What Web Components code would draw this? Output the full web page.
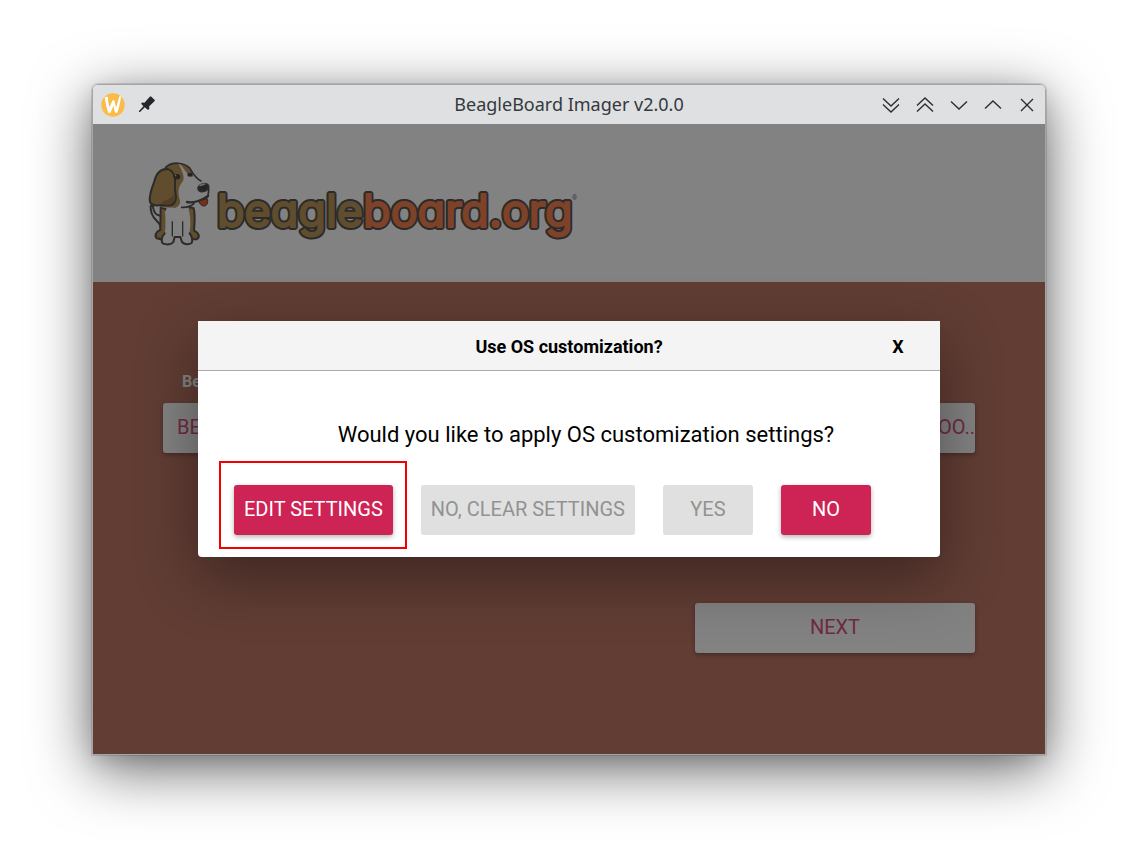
<!DOCTYPE html>
<html lang="en">
<head>
<meta charset="utf-8">
<title>BeagleBoard Imager</title>
<style>
  html { height: 100%; background: #fff; }
  body { margin: 0; min-height: 100%; box-sizing: border-box; padding: 84px 98px 87px 92px; display: flex; font-family: Roboto, "Liberation Sans", sans-serif; }
</style>
</head>
<body>
<app-window></app-window>
<script>
const define = (name, html) => {
  const tpl = document.createElement('template');
  tpl.innerHTML = html;
  customElements.define(name, class extends HTMLElement {
    constructor() {
      super();
      this.attachShadow({ mode: 'open' }).append(tpl.content.cloneNode(true));
    }
  });
};

/* Raised push button; look is chosen by the "kind" attribute */
class PushButton extends HTMLElement {
  constructor() {
    super();
    this.attachShadow({ mode: 'open' }).innerHTML = `
    <style>
      :host { display: block; }
      button { display: block; width: 100%; height: 50px; min-width: 90px; box-sizing: border-box; padding: 0 10px 2px; border: 0; border-radius: 3px;
        font: 400 20px/24px Roboto, sans-serif; white-space: nowrap; background: #fff; color: #da5580;
        box-shadow: 0 2px 5px rgba(0,0,0,.3); text-align: center; }
      :host([kind=primary]) button { background: #cd2355; color: #fff; }
      button:disabled { background: #e0e0e0; color: #929292; box-shadow: none; }
      :host([align=start]) button { text-align: left; padding: 0 14px 2px; }
      :host([align=end]) button { text-align: right; padding: 0 0 2px; }
    </style>
    <button type="button"><slot></slot></button>`;
    this.shadowRoot.querySelector('button').disabled = this.hasAttribute('disabled');
  }
}
customElements.define('push-button', PushButton);

define('title-bar', `
<style>
  :host { display: grid; grid-template-columns: 1fr auto 1fr; align-items: center; height: 39px; background: #dee0e2; color: #35393d; border-radius: 5px 5px 0 0; }
  .left { display: flex; align-items: center; gap: 10px; padding-left: 8px; }
  .right { display: flex; justify-content: flex-end; gap: 10px; padding-right: 6px; }
  h1 { margin: 0; padding-bottom: 2px; font: 400 18px/24px "Noto Sans", sans-serif; }
  button { width: 24px; height: 24px; padding: 0; border: 0; background: none; color: #2b2f33; }
  svg { display: block; width: 24px; height: 24px; }
  .right path { fill: none; stroke: currentColor; stroke-width: 1.4; }
</style>
<div class="left">
  <svg viewBox="0 0 24 24" aria-hidden="true">
    <circle cx="12" cy="12" r="11.7" fill="#fabb48"/>
    <path d="M3.700 4.300 C5 4 5.800 3.600 7 3.800 C6.800 7 7.600 11 8.700 14.300 C9.600 11.500 10.700 9.200 11.600 7.200 L13.600 7.600 C13.700 10 14.300 12.300 15.200 14.500 C16.200 11 17.300 7.500 18.300 3.600 L20 3.200 C19.600 9 18 15 16 20 L14.300 19.800 C13.300 17.500 12.800 15.300 12.500 12.800 C11.400 15 10.600 17.500 9.500 19.800 L7.500 20.300 C5.500 15.500 4.500 10 3.700 4.300 Z" fill="#fff"/>
  </svg>
  <button aria-label="Pin window"><svg viewBox="0 0 24 24"><path fill="#24282c" d="M14.500 4 L15.800 3.200 L20 7.300 L19.200 8.500 L14 13.500 L14.500 15.500 L13 17 L9.800 14.200 L5 19 L4 19 L4 18 L8.400 13.200 L6 10.500 L7.500 9.500 L9.500 9.700 Z"/></svg></button>
</div>
<h1>BeagleBoard Imager v2.0.0</h1>
<div class="right">
  <button aria-label="Keep below"><svg viewBox="0 0 24 24"><path d="M4 5.500 L12 13 L20 5.500 M4 11.500 L12 19 L20 11.500"/></svg></button>
  <button aria-label="Keep above"><svg viewBox="0 0 24 24"><path d="M4 12.500 L12 5 L20 12.500 M4 18.500 L12 11 L20 18.500"/></svg></button>
  <button aria-label="Minimize"><svg viewBox="0 0 24 24"><path d="M4 8.500 L12 16 L20 8.500"/></svg></button>
  <button aria-label="Maximize"><svg viewBox="0 0 24 24"><path d="M4 15.500 L12 8 L20 15.500"/></svg></button>
  <button aria-label="Close"><svg viewBox="0 0 24 24"><path d="M6 6 L18 18 M18 6 L6 18"/></svg></button>
</div>`);

define('brand-logo', `
<style>
  :host { display: flex; align-items: flex-start; }
  .dog { flex: none; width: 64px; height: 84px; }
  .word { flex: none; width: 372px; height: 84px; overflow: visible; }
  #name { font: 400 45px Inter, sans-serif; font-feature-settings: "cv11" 1; stroke-linejoin: round; stroke-width: var(--edge-width, 2px); }
  .tan { fill: #bb9758; stroke: var(--edge, #bb9758); }
  .orange { fill: #f58150; stroke: var(--edge, #f58150); }
  .outline { --edge: #585454; --edge-width: 6px; }
  .reg { font: 400 7px "Liberation Sans", sans-serif; }
</style>
<svg class="dog" viewBox="22 36 192 252" aria-hidden="true" stroke="#585454" stroke-width="6" stroke-linejoin="round" stroke-linecap="round">
  <path d="M62 252 C66 230 62 222 51 212 C38 200 32 185 33 169 C34 164 39 165 40 171 C42 188 50 196 62 197" fill="#fff"/>
  <path d="M63 172 L62 240 C48 245 44 258 51 265 L70 269 C80 268 82 258 80 245 L85 180 Z" fill="#bb9758"/>
  <path d="M145 170 L162 175 C168 200 164 225 163 242 C180 250 181 262 171 268 L148 268 Z" fill="#bb9758"/>
  <path d="M76 186 C78 210 78 235 75 250 C64 262 64 277 71 281 C82 285 96 284 101 276 L105 260 L122 260 L127 276 C134 284 147 285 156 279 C160 268 156 258 150 250 C154 220 152 195 146 170 L85 168 Z" fill="#fff" stroke="none"/>
  <path d="M75 250 C64 262 64 277 71 281 C82 285 96 284 101 276 L105 261 L122 261 L127 276 C134 284 147 285 156 279 C160 268 156 258 150 250" fill="none"/>
  <path d="M98 215 L98 258 M129 215 L129 258" fill="none" stroke-width="4"/>
  <path d="M72 58 C90 35 130 35 150 54 C160 66 163 80 176 92 C195 94 209 103 207 116 C207 128 206 138 200 147 C185 152 172 154 163 160 C154 169 140 173 120 172 L66 172 C60 150 60 90 72 58 Z" fill="#fff" stroke="none"/>
  <path d="M70 58 C85 40 103 38 117 41 C124 58 137 76 130 94 C120 104 112 120 119 145 C124 158 120 168 108 173 L64 172 Z" fill="#bb9758" stroke="none"/>
  <path d="M122 41 C145 43 159 61 160 80 C150 80 145 74 140 67 C134 58 127 50 122 41 Z" fill="#bb9758" stroke="none"/>
  <path d="M78 52 C96 35 132 35 151 55 C158 67 164 82 184 93 M207 116 C207 128 206 138 200 147 M163 160 C154 169 140 173 126 172" fill="none" stroke-width="5"/>
  <path d="M177 153 C182 174 207 174 204 149 C197 145 187 149 177 153 Z" fill="#f05a28" stroke-width="3"/>
  <path d="M142 156 C162 161 190 149 205 138" fill="none" stroke-width="7"/>
  <path d="M31 156 C27 140 35 117 44 94 C49 73 61 57 82 57 C102 60 108 82 106 104 C103 126 113 136 107 153 C99 171 80 166 65 165 C47 168 35 165 31 156 Z" fill="#bb9758"/>
  <path d="M103 132 C94 148 82 149 68 155 C64 157 68 160 74 161 C90 164 101 160 104 150 Z" fill="#9d7848" stroke="none"/>
  <ellipse cx="112" cy="80" rx="10" ry="8" fill="#494545" stroke="none"/>
  <ellipse cx="151" cy="74" rx="8" ry="6" fill="#494545" stroke="none"/>
  <circle cx="108" cy="77" r="2" fill="#fff" stroke="none"/>
  <ellipse cx="191" cy="113" rx="16" ry="11" fill="#494545" transform="rotate(-18 191 113)"/>
  <ellipse cx="188" cy="104" rx="10" ry="3" fill="#d8d4d4" stroke="none" transform="rotate(-18 188 104)"/>
</svg>
<svg class="word" viewBox="0 0 372 84" role="img" aria-label="beagleboard.org">
  <use href="#name" class="outline"/>
  <text id="name" x="6" y="65"><tspan class="tan">beagle</tspan><tspan class="orange">board.org</tspan></text>
  <text class="reg" x="361" y="38" fill="#585454">®</text>
</svg>`);

define('use-dialog', `
<style>
  :host { display: block; width: 742px; background: #fff; color: #000; border-radius: 0 0 4px 4px; box-shadow: 0 20px 60px rgba(0,0,0,.38); }
  header { display: grid; grid-template-columns: 1fr auto 1fr; align-items: center; height: 49px; background: #f4f4f4; border-bottom: 1px solid #aaa; padding: 0 32px; }
  h2, .close { margin: 0; font: 700 18px/24px Roboto, sans-serif; color: #000; }
  h2 { grid-column: 2; }
  h2, .close { padding: 2px 0 0; }
  .close { justify-self: end; width: 20px; border: 0; background: none; }
  .body { padding: 50px 36px 22px; }
  p { margin: 0 0 36px; padding-left: 34px; font-size: 22px; line-height: 28px; text-align: center; }
  .row { display: flex; gap: 28px; }
  .marked { position: relative; }
  .marked::after { content: ""; position: absolute; inset: -24px -14px -14px -15px; border: 2px solid #f50000; pointer-events: none; }
</style>
<header><h2>Use OS customization?</h2><button class="close">X</button></header>
<div class="body">
  <p>Would you like to apply OS customization settings?</p>
  <div class="row">
    <push-button kind="primary" class="marked">EDIT SETTINGS</push-button>
    <push-button disabled>NO, CLEAR SETTINGS</push-button>
    <push-button disabled>YES</push-button>
    <push-button kind="primary">NO</push-button>
  </div>
</div>`);

define('imager-page', `
<style>
  :host { display: flex; flex-direction: column; background: #bf7866; }
  header { background: #fff; padding: 38px 54px 36px; }
  main { flex: 1; padding: 88px 70px 100px; }
  .choices { display: grid; grid-template-columns: repeat(3, 1fr); gap: 28px; }
  .label { display: block; height: 24px; margin-bottom: 9px; padding-left: 19px; font: 700 16px/24px Roboto, sans-serif; color: #fff; }
  .foot { display: flex; justify-content: flex-end; margin-top: 150px; }
  .next { width: 280px; }
</style>
<header><brand-logo></brand-logo></header>
<main>
  <div class="choices">
    <div><span class="label">Be</span><push-button align="start">BE</push-button></div>
    <div></div>
    <div><span class="label"></span><push-button align="end">OO..</push-button></div>
  </div>
  <div class="foot"><push-button class="next">NEXT</push-button></div>
</main>`);

define('app-window', `
<style>
  :host { flex: 1; display: flex; flex-direction: column; box-sizing: border-box; border: 1px solid #a4a6a6; border-radius: 6px 6px 0 0;
    box-shadow: 0 0 0 1px rgba(0,0,0,.12), 0 14px 60px rgba(0,0,0,.6), 0 6px 20px rgba(0,0,0,.12); }
  .content { flex: 1; position: relative; display: flex; }
  imager-page { flex: 1; }
  .shade { position: absolute; inset: 0; display: flex; align-items: center; justify-content: center; background: rgba(0,0,0,.49); overflow: hidden; }
</style>
<title-bar></title-bar>
<div class="content">
  <imager-page></imager-page>
  <div class="shade"><use-dialog role="dialog"></use-dialog></div>
</div>`);
</script>
</body>
</html>
